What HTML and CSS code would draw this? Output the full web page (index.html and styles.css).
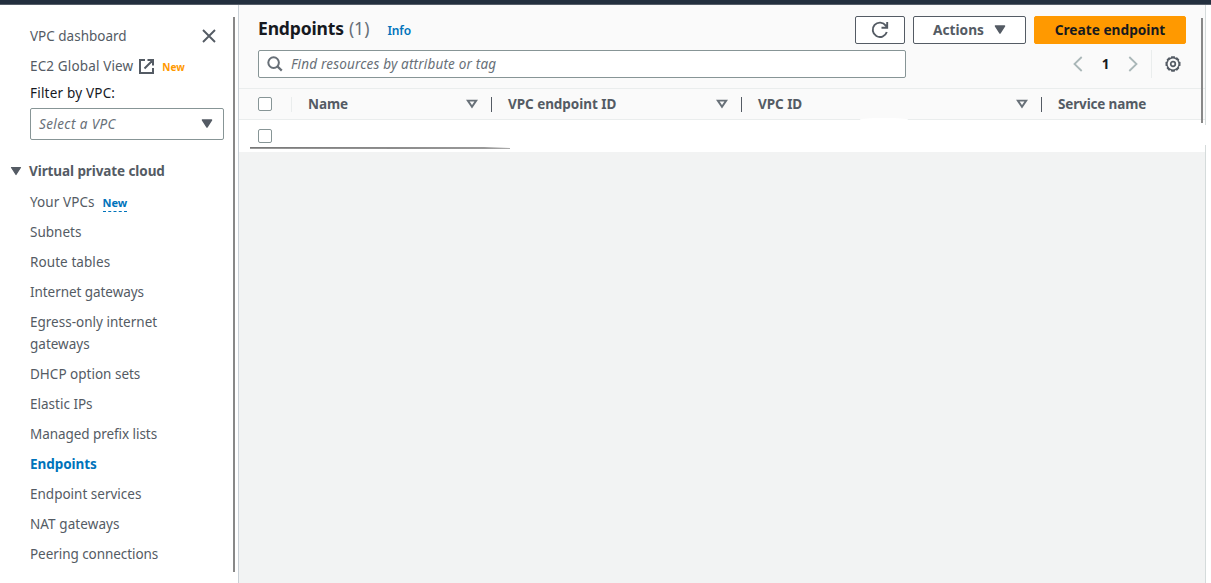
FILE: index.html
```html
<!DOCTYPE html>
<html lang="en">
<head>
<meta charset="utf-8">
<title>Endpoints | VPC</title>
<link rel="stylesheet" href="styles.css">
</head>
<body>
<div class="topbar"></div>
<div class="layout">
  <nav class="sidebar">
    <div class="side-head">
      <a class="link dash">VPC dashboard</a>
      <svg class="close" width="14" height="14" viewBox="0 0 14 14"><path d="M1 1l12 12M13 1L1 13" fill="none" stroke="#545b64" stroke-width="1.9"/></svg>
    </div>
    <div class="global-row">
      <a class="link global">EC2 Global View</a>
      <svg class="external" width="15" height="15" viewBox="0 0 15 15"><path d="M6 1H1v13h13V9M8.5 1H14v5.5M14 1L5.5 9.5" fill="none" stroke="#545b64" stroke-width="2"/></svg>
      <span class="new-orange">New</span>
    </div>
    <div class="filter-label"><span>Filter by VPC:</span></div>
    <div class="select"><span>Select a VPC</span><svg width="12" height="10" viewBox="0 0 12 10"><path d="M1.5 1h9L6 8z" fill="#545b64" stroke="#545b64" stroke-width="1.5" stroke-linejoin="round"/></svg></div>
    <div class="section"><svg width="12" height="10" viewBox="0 0 12 10"><path d="M1.5 1.5h9L6 8.5z" fill="#545b64" stroke="#545b64" stroke-width="1.2" stroke-linejoin="round"/></svg><span>Virtual private cloud</span></div>
    <ul class="menu">
      <li><span class="looser">Your VPCs</span><span class="new-blue">New</span></li>
      <li><span>Subnets</span></li>
      <li><span class="looser">Route tables</span></li>
      <li><span class="tighter">Internet gateways</span></li>
      <li><span>Egress-only internet<br>gateways</span></li>
      <li><span>DHCP option sets</span></li>
      <li><span>Elastic IPs</span></li>
      <li><span class="tighter">Managed prefix lists</span></li>
      <li class="active"><span class="tighter">Endpoints</span></li>
      <li><span>Endpoint services</span></li>
      <li><span class="looser">NAT gateways</span></li>
      <li><span class="tighter">Peering connections</span></li>
    </ul>
    <div class="side-scroll"></div>
  </nav>
  <main class="main">
    <header class="panel-head">
      <div class="title-row">
        <h1>Endpoints</h1><span class="count">(1)</span><a class="info">Info</a>
        <div class="actions">
          <button class="btn refresh"><svg width="18" height="18" viewBox="0 0 18 18"><path d="M15.8 11A7.2 7.2 0 1 1 14.8 4.6L16 6M16.2 1v5.7h-5.7" fill="none" stroke="#545b64" stroke-width="1.9"/></svg></button>
          <button class="btn drop"><span>Actions</span><svg width="12" height="10" viewBox="0 0 12 10"><path d="M1.5 1h9L6 8z" fill="#545b64" stroke="#545b64" stroke-width="1.5" stroke-linejoin="round"/></svg></button>
          <button class="btn primary"><span>Create endpoint</span></button>
        </div>
      </div>
      <div class="search-row">
        <div class="search"><svg width="16" height="16" viewBox="0 0 16 16"><circle cx="6.6" cy="6.6" r="5.3" fill="none" stroke="#687078" stroke-width="2"/><path d="M10.4 10.4l4.4 4.2" stroke="#687078" stroke-width="2.2"/></svg><span>Find resources by attribute or tag</span></div>
        <div class="pager">
          <svg width="10" height="16" viewBox="0 0 10 16"><path d="M8.7 1L1.5 8l7.2 7" fill="none" stroke="#aab7b8" stroke-width="1.8"/></svg>
          <span class="page">1</span>
          <svg width="10" height="16" viewBox="0 0 10 16"><path d="M1.3 1l7.2 7-7.2 7" fill="none" stroke="#aab7b8" stroke-width="1.8"/></svg>
          <span class="pager-line"></span>
          <svg class="gear" width="18" height="18" viewBox="0 0 18 18"><path d="M7.3 1.2h3.4l.7 1.5 1.6-.5 2.3 2.3-.5 1.7 1.7.9v3.6l-1.7.9.5 1.7-2.3 2.4-1.6-.6-.8 1.7H7.4l-.8-1.7-1.7.6-2.3-2.4.6-1.7-1.7-.9V7.1l1.7-.9-.6-1.7 2.3-2.3 1.7.5z" fill="#545b64"/><circle cx="9" cy="9" r="5.4" fill="#fafafa"/><circle cx="9" cy="9" r="2.3" fill="none" stroke="#545b64" stroke-width="1.7"/></svg>
        </div>
      </div>
    </header>
    <div class="cols">
      <div class="check-cell"><i class="box"></i></div>
      <div class="col"><span>Name</span><svg width="12" height="10" viewBox="0 0 12 10"><path d="M1.8 1.6h8.4L6 7.8z" fill="none" stroke="#687078" stroke-width="1.9"/></svg></div>
      <div class="col"><span>VPC endpoint ID</span><svg width="12" height="10" viewBox="0 0 12 10"><path d="M1.8 1.6h8.4L6 7.8z" fill="none" stroke="#687078" stroke-width="1.9"/></svg></div>
      <div class="col wide"><span>VPC ID</span><svg width="12" height="10" viewBox="0 0 12 10"><path d="M1.8 1.6h8.4L6 7.8z" fill="none" stroke="#687078" stroke-width="1.9"/></svg></div>
      <div class="col last"><span>Service name</span></div>
    </div>
    <div class="row"><i class="box"></i><div class="row-scroll"></div><div class="smudge"></div></div>
    <div class="main-scroll"></div>
    <div class="edge-gap"></div>
  </main>
</div>
</body>
</html>
```
FILE: styles.css
```css
* { box-sizing: border-box; }
body { margin: 0; height: 583px; overflow: hidden; background: #fff; color: #545b64; font: 13.5px/22px "Noto Sans", sans-serif; }
svg { display: block; flex: none; }
span, a, h1 { white-space: nowrap; }
.topbar { height: 5px; background: #232f3e; border-bottom: 1px solid #555d68; }
.layout { display: flex; height: 578px; }

.sidebar { position: relative; width: 239px; flex: none; padding: 20px 14px 0 30px; border-right: 1px solid #c9d0d6; }
.side-head { display: flex; justify-content: space-between; align-items: center; height: 22px; padding-right: 8px; }
.global-row { display: flex; align-items: center; height: 22px; margin-top: 8px; }
.global { letter-spacing: 0.14px; }
.external { margin-left: 6px; }
.new-orange { margin-left: 8px; font-size: 10px; font-weight: 700; color: #ff9900; padding-top: 2px; }
.filter-label { height: 22px; margin-top: 5px; color: #16191f; letter-spacing: 0.2px; }
.select { display: flex; align-items: center; justify-content: space-between; height: 32px; margin-top: 4px; padding: 0 10px 0 8px; border: 1px solid #879596; border-radius: 2px; font-style: italic; color: #687078; letter-spacing: 0.4px; }
.section { display: flex; align-items: center; height: 22px; margin: 20px 0 0 -20px; font-weight: 700; letter-spacing: -0.09px; }
.section span { margin-left: 7px; }
.menu { list-style: none; margin: 9px 0 0; padding: 0; display: grid; gap: 8px; }
.menu li { display: flex; align-items: flex-start; }
.looser { letter-spacing: 0.08px; }
.tighter { letter-spacing: -0.06px; }
.new-blue { margin: 4px 0 0 8px; height: 17px; line-height: 15px; font-size: 11px; font-weight: 700; color: #0073bb; border-bottom: 1px dashed #0073bb; }
.active { color: #0073bb; font-weight: 700; }
.side-scroll { position: absolute; left: 233px; top: 12px; width: 2px; height: 555px; background: #888; }

.main { position: relative; width: 967px; background: #f2f3f3; border-right: 1px solid #d5dbdb; }
.panel-head { height: 84px; padding: 11px 19px 0; background: #fafafa; border-bottom: 1px solid #eaeded; }
.title-row { display: flex; height: 28px; }
h1 { margin: 0; font-size: 17.5px; line-height: 25px; letter-spacing: -0.15px; color: #16191f; }
.count { margin-left: 5px; font-size: 17.5px; line-height: 24px; color: #687078; }
.info { margin-left: 18px; font-size: 12px; line-height: 29px; font-weight: 600; letter-spacing: -0.1px; color: #0073bb; }
.actions { display: flex; gap: 8px; margin-left: auto; }
.btn { display: flex; align-items: center; justify-content: center; height: 28px; padding: 0; border: 1px solid #545b64; border-radius: 2px; background: #fff; color: #545b64; font: 700 13.7px/22px "Noto Sans", sans-serif; }
.refresh { width: 50px; }
.drop { width: 113px; gap: 10px; }
.primary { width: 152px; background: #ff9900; border-color: #ff9900; color: #16191f; }
.search-row { display: flex; justify-content: space-between; height: 28px; margin-top: 6px; }
.search { display: flex; align-items: center; width: 648px; padding-left: 8px; border: 1px solid #879596; border-radius: 2px; background: #fff; color: #687078; font-style: italic; letter-spacing: 0.18px; }
.search span { margin-left: 8px; }
.pager { display: flex; align-items: center; padding-right: 4px; }
.page { width: 45px; text-align: center; color: #16191f; font-weight: 700; }
.pager-line { width: 1px; height: 28px; margin: 0 12px 0 13px; background: #eaeded; }
.cols { display: flex; align-items: center; height: 31px; background: #fafafa; border-bottom: 1px solid #eaeded; font-weight: 700; letter-spacing: -0.05px; }
.check-cell { width: 53px; height: 15px; padding-left: 19px; border-right: 1px solid #eaeded; }
.box { display: block; width: 14px; height: 14px; border: 1px solid #879596; border-radius: 2px; background: #fff; }
.col { display: flex; align-items: center; justify-content: space-between; width: 200px; height: 15px; padding: 0 13px 0 16px; border-right: 1px solid #545b64; }
.col + .col { width: 250px; }
.col.wide { width: 300px; }
.col.last { flex: 1; border: 0; padding-right: 0; letter-spacing: -0.15px; }
.row { position: relative; height: 32px; padding: 9px 19px; background: #fff; }
.row-scroll { position: absolute; left: 11px; top: 27px; width: 260px; height: 2px; background: linear-gradient(90deg, #777, #999 90%, #aaa); clip-path: polygon(0 0, 90% 0, 100% 50%, 100% 100%, 60% 100%, 0 90%); }
.smudge { position: absolute; left: 621px; top: -2px; width: 48px; height: 3px; border-radius: 50% 50% 0 0; background: #fff; }
.main-scroll { position: absolute; left: 962px; top: 13px; width: 2px; height: 105px; background: #888; }
.edge-gap { position: absolute; left: 966px; top: 120px; width: 2px; height: 20px; background: #fff; }
```
